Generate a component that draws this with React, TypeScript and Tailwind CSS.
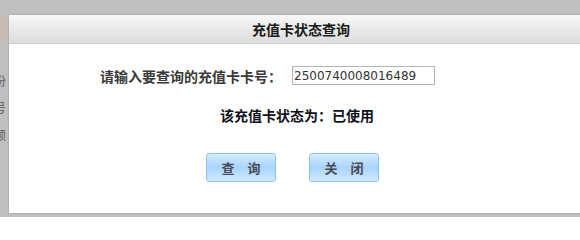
import React from "react";

export default function App() {
  const cjk = { fontFamily: '"Noto Sans CJK SC", "Noto Sans", sans-serif' };
  return (
    <div className="w-[580px] h-[217px] overflow-hidden bg-[#c0c0c0] flex" style={cjk}>
      {/* background page strip on the left */}
      <div className="w-[9px] shrink-0 overflow-hidden flex flex-col">
        <div className="h-[15px]" />
        <div className="h-[27px] bg-[#c5bcb6]" />
        <div className="flex flex-col ml-[-6px] text-[12px] leading-[12px] text-[#5a5a5a] gap-[15px] mt-[33px]">
          <span>份</span>
          <span>号</span>
          <span>额</span>
        </div>
      </div>

      {/* dialog */}
      <div className="mt-[15px] w-[584px] h-[198px] shrink-0 bg-white flex flex-col shadow-[0_0_2px_rgba(0,0,0,0.25)] rounded-tl-[2px]">
        <div className="h-[29px] bg-gradient-to-b from-[#f8f8f8] to-[#dcdcdc] border-b border-[#d0d0d0] flex items-center justify-center">
          <span className="text-[14px] font-bold text-[#1a1a1a] leading-none">充值卡状态查询</span>
        </div>

        <div className="flex items-center mt-[22px] pl-[91px] h-[19px]">
          <span className="text-[14px] font-bold text-[#3a3a3a] leading-none w-[192px]">请输入要查询的充值卡卡号：</span>
          <div
            className="w-[143px] h-[19px] border border-[#b4b4b4] flex items-center pl-[1px] text-[12px] text-[#333] leading-none"
            style={{ fontFamily: '"DejaVu Sans", Verdana, sans-serif' }}
          >
            2500740008016489
          </div>
        </div>

        <div className="mt-[20px] h-[20px] flex items-center pl-[211px]">
          <span className="text-[14px] font-bold text-[#10101a] leading-none">该充值卡状态为：已使用</span>
        </div>

        <div className="mt-[28px] flex pl-[197px] gap-[33px]">
          <button className="w-[70px] h-[29px] rounded-[3px] border border-[#8cc6f4] bg-gradient-to-b from-[#d6ecff] via-[#a8d4fc] to-[#cfe9ff] text-[13px] font-bold text-[#4a4a55] leading-none">
            查　询
          </button>
          <button className="w-[70px] h-[29px] rounded-[3px] border border-[#8cc6f4] bg-gradient-to-b from-[#d6ecff] via-[#a8d4fc] to-[#cfe9ff] text-[13px] font-bold text-[#4a4a55] leading-none">
            关　闭
          </button>
        </div>
      </div>
    </div>
  );
}
